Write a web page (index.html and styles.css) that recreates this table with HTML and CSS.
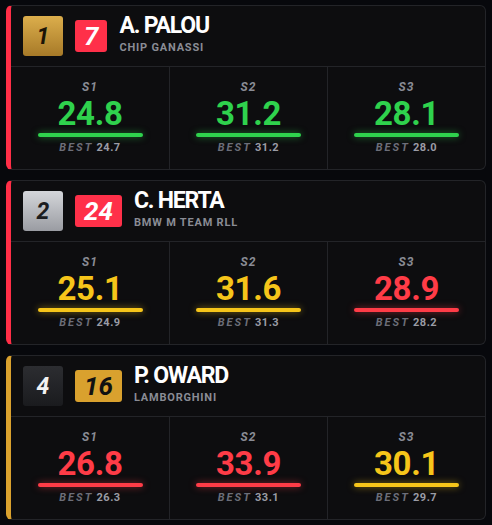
FILE: index.html
```html
<!DOCTYPE html>
<html>
<head>
<meta charset="utf-8">
<link rel="stylesheet" href="styles.css">
</head>
<body>
<div class="list">
  <div class="card edge-red">
    <div class="head">
      <div class="pos pos-gold">1</div>
      <div class="num num-red">7</div>
      <div class="who">
        <div class="name">A. PALOU</div>
        <div class="team">CHIP GANASSI</div>
      </div>
    </div>
    <div class="sectors">
      <div class="sector green"><div class="lbl">S1</div><div class="val">24.8</div><div class="bar"></div><div class="best"><span class="bl">BEST</span> 24.7</div></div>
      <div class="sector green"><div class="lbl">S2</div><div class="val">31.2</div><div class="bar"></div><div class="best"><span class="bl">BEST</span> 31.2</div></div>
      <div class="sector green"><div class="lbl">S3</div><div class="val">28.1</div><div class="bar"></div><div class="best"><span class="bl">BEST</span> 28.0</div></div>
    </div>
  </div>
  <div class="card edge-red">
    <div class="head">
      <div class="pos pos-silver">2</div>
      <div class="num num-red">24</div>
      <div class="who">
        <div class="name">C. HERTA</div>
        <div class="team">BMW M TEAM RLL</div>
      </div>
    </div>
    <div class="sectors">
      <div class="sector yellow"><div class="lbl">S1</div><div class="val">25.1</div><div class="bar"></div><div class="best"><span class="bl">BEST</span> 24.9</div></div>
      <div class="sector yellow"><div class="lbl">S2</div><div class="val">31.6</div><div class="bar"></div><div class="best"><span class="bl">BEST</span> 31.3</div></div>
      <div class="sector red"><div class="lbl">S3</div><div class="val">28.9</div><div class="bar"></div><div class="best"><span class="bl">BEST</span> 28.2</div></div>
    </div>
  </div>
  <div class="card edge-gold">
    <div class="head">
      <div class="pos pos-dark">4</div>
      <div class="num num-gold">16</div>
      <div class="who">
        <div class="name">P. OWARD</div>
        <div class="team">LAMBORGHINI</div>
      </div>
    </div>
    <div class="sectors">
      <div class="sector red"><div class="lbl">S1</div><div class="val">26.8</div><div class="bar"></div><div class="best"><span class="bl">BEST</span> 26.3</div></div>
      <div class="sector red"><div class="lbl">S2</div><div class="val">33.9</div><div class="bar"></div><div class="best"><span class="bl">BEST</span> 33.1</div></div>
      <div class="sector yellow"><div class="lbl">S3</div><div class="val">30.1</div><div class="bar"></div><div class="best"><span class="bl">BEST</span> 29.7</div></div>
    </div>
  </div>
</div>
</body>
</html>
```
FILE: styles.css
```css
* { box-sizing: border-box; }
html, body { background: #07080c; }
body {
  margin: 0;
  padding: 5px 6px;
  font-family: Roboto, "Liberation Sans", sans-serif;
  color: #fff;
}
.list { display: flex; flex-direction: column; gap: 10px; }
.card {
  background: #0d0d0f;
  border: 1px solid #232428;
  border-left: 5px solid #ff2d45;
  border-radius: 6px;
  height: 165px;
  display: flex;
  flex-direction: column;
}
.edge-red { border-left-color: #ff2e47; }
.edge-gold { border-left-color: #d9a12e; }
.head {
  display: flex;
  align-items: center;
  gap: 12px;
  padding: 10px 12px;
  height: 61px;
  border-bottom: 1px solid #232428;
}
.pos {
  width: 40px; height: 40px;
  border-radius: 3px;
  display: flex; align-items: center; justify-content: center;
  font-size: 23px; font-weight: 700; font-style: italic;
}
.pos-gold { background: linear-gradient(180deg, #dcae4c, #a77a28); color: #1a1406; }
.pos-silver { background: linear-gradient(180deg, #d4d6da, #9a9ca2); color: #1c1d21; }
.pos-dark { background: linear-gradient(180deg, #2c2d31, #1a1b1e); color: #f2f2f2; }
.num {
  min-width: 32px; height: 32px;
  padding: 0 9px;
  border-radius: 3px;
  display: flex; align-items: center; justify-content: center;
  font-size: 26px; font-weight: 700; font-style: italic;
}
.num-red { background: #ff3049; color: #fff; }
.num-gold { background: #d9a12e; color: #111; }
.who { display: flex; flex-direction: column; gap: 4px; padding-bottom: 4px; }
.name { font-size: 23px; font-weight: 700; line-height: 24px; letter-spacing: -1.2px; color: #fff; }
.team { font-size: 11px; font-weight: 700; letter-spacing: 0.8px; color: #8a8c95; line-height: 12px; }
.sectors {
  flex: 1;
  display: grid;
  grid-template-columns: 1fr 1fr 1fr;
}
.sector {
  display: flex; flex-direction: column; align-items: center;
  padding-top: 13px;
  border-left: 1px solid #232428;
}
.sector:first-child { border-left: none; }
.lbl { font-size: 12px; font-weight: 700; font-style: italic; color: #8a8c95; letter-spacing: 1px; line-height: 14px; }
.val { font-size: 33px; font-weight: 700; line-height: 36px; margin-top: 2px; letter-spacing: -0.3px; }
.bar { width: 105px; height: 4px; border-radius: 2px; margin-top: 1px; }
.best { margin-top: 4px; font-size: 11px; font-weight: 700; color: #9a9ca5; line-height: 13px; letter-spacing: 0.5px; }
.bl { font-style: italic; color: #6c6e78; letter-spacing: 2px; }
.green .val { color: #2fd24d; }
.green .bar { background: #2fd24d; box-shadow: 0 0 7px rgba(47, 210, 77, 0.55); }
.yellow .val { color: #f6c51a; }
.yellow .bar { background: #f6c51a; box-shadow: 0 0 7px rgba(246, 197, 26, 0.55); }
.red .val { color: #ff3c47; }
.red .bar { background: #ff3c47; box-shadow: 0 0 7px rgba(255, 60, 71, 0.55); }
```
